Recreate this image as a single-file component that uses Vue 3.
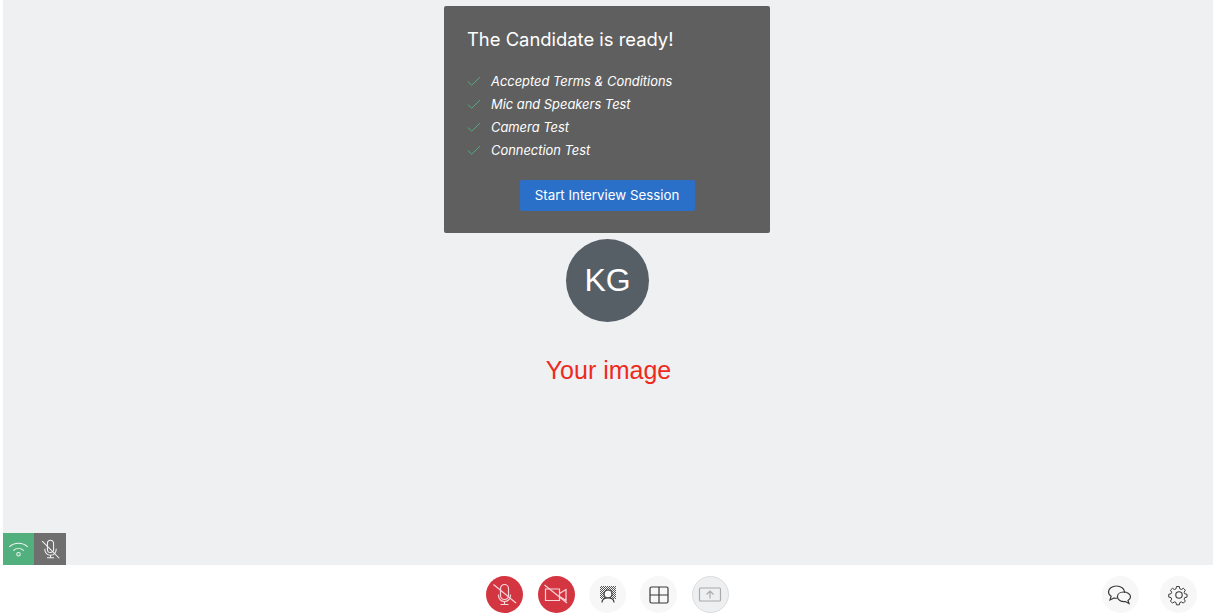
<template>
  <div class="page">
    <main class="stage">
      <section class="ready-card">
        <h2 class="ready-title">The Candidate is ready!</h2>
        <ul class="check-list">
          <li v-for="item in checks" :key="item" class="check-item">
            <svg class="check-icon" viewBox="0 0 16 16"><path d="M1 8.600 5.400 12.800 15 3.400" /></svg>
            <span>{{ item }}</span>
          </li>
        </ul>
        <button class="start-btn">Start Interview Session</button>
      </section>

      <div class="avatar">KG</div>
      <div class="your-image">Your image</div>

      <div class="status-badges">
        <div class="badge badge-green">
          <svg viewBox="0 0 24 24" class="badge-icon">
            <path d="M1.500 9C7.500 3.600 16.500 3.600 22.500 9" />
            <path d="M6 13.200C9.600 10 14.400 10 18 13.200" />
            <circle cx="12" cy="17.500" r="2" />
          </svg>
        </div>
        <div class="badge badge-gray">
          <svg viewBox="0 0 24 24" class="badge-icon">
            <path d="M8.500 5a3.500 3.500 0 0 1 7 0v7a3.500 3.500 0 0 1-7 0z" />
            <path d="M5.500 11v1a6.500 6.500 0 0 0 13 0v-1M12 18.500v3M8 21.500h8" />
            <path d="M2.500 2.500 22 22" />
          </svg>
        </div>
      </div>
    </main>

    <footer class="toolbar">
      <div></div>
      <div class="tool-group">
        <button class="tool tool-red">
          <svg viewBox="0 0 24 24">
            <path d="M7.500 5.500a4 4 0 0 1 8 0v7a4 4 0 0 1-8 0z" />
            <path d="M5.500 11.500v1a6 6 0 0 0 12 0v-1M11.500 18.500v3M7.500 21.500h8" />
            <path d="M0.500 1.500 23 20" />
          </svg>
        </button>
        <button class="tool tool-red">
          <svg viewBox="0 0 24 24">
            <path d="M1.500 6h14v11.500h-14zM15.500 10.500l6.500-4v11l-6.500-4" />
            <path d="M0.500 2 23 20" />
          </svg>
        </button>
        <button class="tool">
          <svg viewBox="0 0 24 24">
            <defs>
              <pattern id="noise" width="2" height="2" patternUnits="userSpaceOnUse">
                <rect width="1" height="1" fill="#555" stroke="none" />
                <rect x="1" y="1" width="1" height="1" fill="#555" stroke="none" />
              </pattern>
            </defs>
            <rect x="4" y="3" width="16" height="13" fill="url(#noise)" stroke="none" />
            <circle cx="12" cy="11" r="4" class="fill-light" />
            <path d="M6 19.500c0-3 2.500-4.500 6-4.500s6 1.500 6 4.500" class="fill-light" />
          </svg>
        </button>
        <button class="tool">
          <svg viewBox="0 0 24 24">
            <rect x="3" y="4" width="18" height="16" rx="1.500" />
            <path d="M3 12h18M12 4v16" />
          </svg>
        </button>
        <button class="tool tool-disabled">
          <svg viewBox="0 0 24 24" class="muted">
            <rect x="1.500" y="5" width="21" height="13" rx="1" />
            <path d="M12 15.500V8.500M8.500 11.500 12 8l3.500 3.500" />
          </svg>
        </button>
      </div>
      <div class="tool-group tool-right">
        <button class="tool">
          <svg viewBox="0 0 24 24" class="chat">
            <path d="M8.500 3c4.400 0 8 2.500 8 5.800a4 4 0 0 1-.1 1" />
            <path d="M8.500 3C4 3 .5 5.500 .5 9c0 1.900 1 3.300 2.600 4.300L2 17l4.200-2c.9.2 1.800.3 3 .2" />
            <path d="M15.500 9c4 0 7 2.100 7 4.800 0 1.600-1 2.900-2.500 3.700l1 3-3.600-2c-4.300.6-8-1.700-8-4.700 0-2.700 2.600-4.800 6.100-4.800z" />
          </svg>
        </button>
        <button class="tool">
          <svg viewBox="0 0 24 24" class="gear">
            <circle cx="12" cy="12" r="3.500" />
            <path d="M10.300 2.500h3.400l.6 2.800 1.900.8 2.400-1.500 2.400 2.400-1.500 2.400.8 1.900 2.800.6v3.400l-2.800.6-.8 1.900 1.500 2.400-2.400 2.400-2.400-1.500-1.900.8-.6 2.800h-3.400l-.6-2.800-1.900-.8-2.400 1.500-2.400-2.400 1.500-2.400-.8-1.900-2.800-.6v-3.400l2.800-.6.8-1.900-1.500-2.400 2.400-2.400 2.400 1.500 1.900-.8z" transform="translate(0 .500) scale(.9)" />
          </svg>
        </button>
      </div>
    </footer>
  </div>
</template>

<script setup>
const checks = [
  'Accepted Terms & Conditions',
  'Mic and Speakers Test',
  'Camera Test',
  'Connection Test'
]
</script>

<style scoped>
.page {
  display: flex;
  flex-direction: column;
  height: 616px;
  background: #fff;
  font-family: Inter, "Liberation Sans", sans-serif;
}

.stage {
  position: relative;
  flex: none;
  height: 565px;
  margin: 0 3px;
  padding: 6px 2px 0 0;
  box-sizing: border-box;
  background: #eff0f2;
  display: flex;
  flex-direction: column;
  align-items: center;
}

.ready-card {
  width: 326px;
  height: 227px;
  box-sizing: border-box;
  padding: 21px 23px 0;
  background: #5f5f5f;
  border-radius: 2px;
  color: #fff;
  display: flex;
  flex-direction: column;
}

.ready-title {
  margin: 0;
  font-size: 18.400px;
  line-height: 24px;
  font-weight: 400;
}

.check-list {
  list-style: none;
  margin: 19px 0 0;
  padding: 0;
}

.check-item {
  display: flex;
  align-items: center;
  gap: 10px;
  height: 23px;
  font-size: 12.900px;
  font-style: italic;
}

.check-icon {
  width: 14px;
  height: 14px;
  margin-top: -2px;
  fill: none;
  stroke: #55ad80;
  stroke-width: 1.100;
}

.start-btn {
  align-self: center;
  margin: 18px 0 0;
  width: 175px;
  height: 31px;
  padding: 0 0 2px;
  border: 0;
  border-radius: 2px;
  background: #2b70c8;
  color: #fff;
  font-family: inherit;
  font-size: 13.300px;
}

.avatar {
  width: 83px;
  height: 83px;
  padding-left: 1px;
  box-sizing: border-box;
  margin-top: 6px;
  border-radius: 50%;
  background: #565e66;
  color: #fff;
  font-family: "Liberation Sans", sans-serif;
  font-size: 32px;
  display: flex;
  align-items: center;
  justify-content: center;
}

.your-image {
  margin: 33px 0 0 3px;
  color: #ee2a1f;
  font-family: "Liberation Sans", sans-serif;
  font-size: 25px;
  line-height: 30px;
}

.status-badges {
  position: absolute;
  left: 0;
  bottom: 0;
  display: flex;
}

.badge {
  height: 32px;
  display: flex;
  align-items: center;
  justify-content: center;
}

.badge-green { background: #52b07f; width: 31px; }
.badge-gray { background: #6f6f6f; width: 32px; }

.badge-icon {
  width: 21px;
  height: 21px;
  fill: none;
  stroke: #f2f2f2;
  stroke-width: 1.200;
}

.toolbar {
  flex: 1;
  display: grid;
  grid-template-columns: 1fr auto 1fr;
  align-items: start;
  padding-top: 11px;
}

.tool-group {
  display: flex;
  gap: 14.300px;
  margin-left: -1px;
}

.tool-right {
  justify-content: flex-end;
  gap: 21px;
  padding-right: 19px;
  margin-left: 0;
}

.tool {
  width: 37px;
  height: 37px;
  padding: 0;
  border: 0;
  border-radius: 50%;
  background: #f7f7f7;
  display: flex;
  align-items: center;
  justify-content: center;
}

.tool svg {
  width: 24px;
  height: 24px;
  fill: none;
  stroke: #3a3a3a;
  stroke-width: 1.200;
}

.tool-red { background: #d33541; }
.tool-red svg { stroke: #f6d7da; }

.tool-disabled {
  background: #eeeff1;
  border: 1px solid #dcdcdc;
  box-sizing: border-box;
}

.tool svg.muted { stroke: #aaa; }
.tool svg.gear { width: 22px; height: 22px; }
.tool svg.chat { margin-left: -2px; }

.fill-light {
  fill: #f7f7f7;
}
</style>

<style>
html, body {
  margin: 0;
  background: #fff;
}
</style>
